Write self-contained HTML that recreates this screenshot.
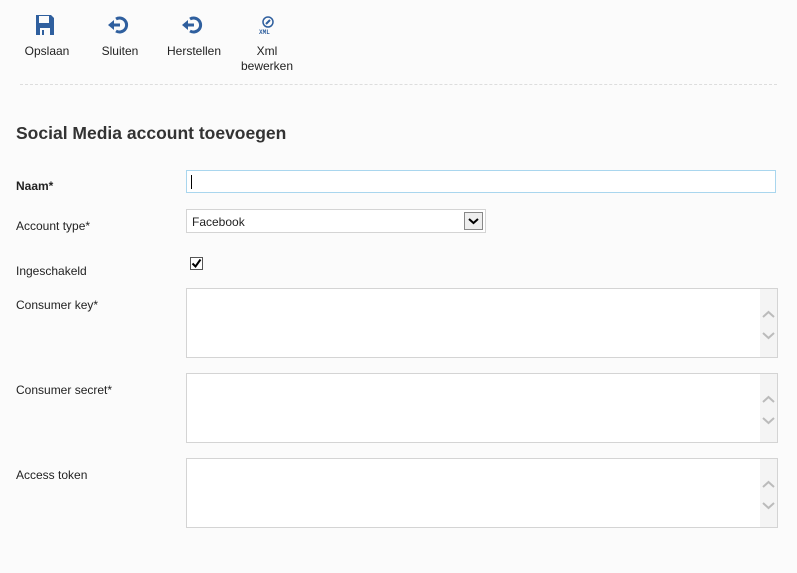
<!DOCTYPE html>
<html><head><style>
*{margin:0;padding:0;box-sizing:border-box}
body{width:797px;height:573px;background:#fbfbfb;font-family:"Segoe UI","Liberation Sans",sans-serif;font-size:12px;color:#222;position:relative;overflow:hidden}
.a{position:absolute}
.tb{font-size:12px;text-align:center;color:#222;line-height:15px}
.ta{position:absolute;left:186px;width:592px;height:70px;border:1px solid #d4d4d4;background:#fff}
.sb{position:absolute;right:0;top:0;width:17px;height:100%;background:#f4f4f4}
.lbl{position:absolute;left:16px;font-size:12px}
</style></head><body>
<svg class="a" style="left:35px;top:14px" width="20" height="22" viewBox="0 0 20 22"><path d="M1 1h15l3 3v17H1z" fill="#2f5f9e"/><rect x="4" y="2" width="10" height="7" fill="#fbfbfb"/><rect x="5" y="14" width="10" height="7" fill="#fbfbfb"/><rect x="7" y="16" width="2" height="5" fill="#2f5f9e"/></svg>
<div class="a tb" style="left:20px;top:44px;width:54px">Opslaan</div>
<svg class="a" style="left:107px;top:15px" width="22" height="20" viewBox="0 0 22 20"><path d="M9 4a7 7 0 1 1 0 12" fill="none" stroke="#2f5f9e" stroke-width="3"/><path d="M1 10l6-5v10z M5 8.5h8v3H5z" fill="#2f5f9e"/></svg>
<div class="a tb" style="left:95px;top:44px;width:50px">Sluiten</div>
<svg class="a" style="left:181px;top:15px" width="22" height="20" viewBox="0 0 22 20"><path d="M9 4a7 7 0 1 1 0 12" fill="none" stroke="#2f5f9e" stroke-width="3"/><path d="M1 10l6-5v10z M5 8.5h8v3H5z" fill="#2f5f9e"/></svg>
<div class="a tb" style="left:162px;top:44px;width:64px">Herstellen</div>
<svg class="a" style="left:258px;top:15px" width="18" height="20" viewBox="0 0 18 20"><circle cx="10" cy="7" r="5" fill="none" stroke="#2f5f9e" stroke-width="1.5"/><path d="M8 9l4-4" stroke="#2f5f9e" stroke-width="2"/><text x="1" y="19" font-size="6" font-family="Liberation Mono" fill="#2f5f9e" font-weight="bold">XML</text></svg>
<div class="a tb" style="left:234px;top:44px;width:66px">Xml<br>bewerken</div>
<div class="a" style="left:20px;top:84px;width:757px;border-top:1px dashed #ddd"></div>
<div class="a" style="left:16px;top:123px;font-size:17.5px;font-weight:bold;color:#333">Social Media account toevoegen</div>
<div class="lbl" style="top:179px;font-weight:bold">Naam*</div>
<div class="a" style="left:186px;top:170px;width:590px;height:23px;border:1px solid #a9d6ee;background:#fff"><div class="a" style="left:4px;top:4px;width:1px;height:14px;background:#000"></div></div>
<div class="lbl" style="top:219px">Account type*</div>
<div class="a" style="left:186px;top:209px;width:300px;height:24px;border:1px solid #d4d4d4;background:#fff"><span class="a" style="left:5px;top:5px">Facebook</span><div class="a" style="left:277px;top:2px;width:19px;height:18px;border:1px solid #888;background:#eee"><svg width="17" height="16"><path d="M4 6l4.5 4 4.5-4" fill="none" stroke="#000" stroke-width="2"/></svg></div></div>
<div class="lbl" style="top:264px">Ingeschakeld</div>
<div class="a" style="left:190px;top:257px;width:13px;height:13px;border:1px solid #555;background:#fff"><svg width="11" height="11"><path d="M1.5 5.5l3 3 5-7" fill="none" stroke="#000" stroke-width="2"/></svg></div>
<div class="lbl" style="top:298px">Consumer key*</div>
<div class="ta" style="top:288px"><div class="sb"><svg width="17" height="68"><path d="M3 28l5.5-5 5.5 5M3 44l5.5 5 5.5-5" fill="none" stroke="#bbb" stroke-width="2"/></svg></div></div>
<div class="lbl" style="top:383px">Consumer secret*</div>
<div class="ta" style="top:373px"><div class="sb"><svg width="17" height="68"><path d="M3 28l5.5-5 5.5 5M3 44l5.5 5 5.5-5" fill="none" stroke="#bbb" stroke-width="2"/></svg></div></div>
<div class="lbl" style="top:468px">Access token</div>
<div class="ta" style="top:458px"><div class="sb"><svg width="17" height="68"><path d="M3 28l5.5-5 5.5 5M3 44l5.5 5 5.5-5" fill="none" stroke="#bbb" stroke-width="2"/></svg></div></div>
</body></html>
